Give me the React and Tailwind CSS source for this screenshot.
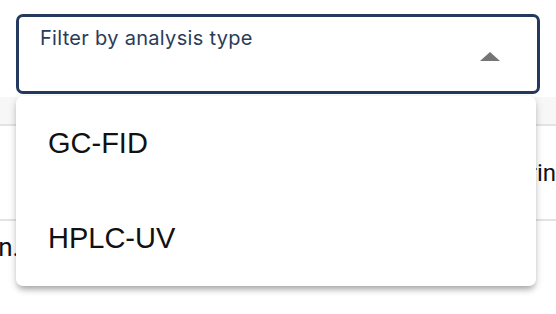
const options = ['GC-FID', 'HPLC-UV'];

export default function App() {
  return (
    <div className="relative h-[314px] w-[556px] overflow-hidden bg-white">
      <div className="px-4 pt-[14px]">
        <div className="flex h-[80px] items-start justify-between rounded-[7px] border-[3px] border-[#233a5e] bg-white pl-[21px] pr-[37px] pt-[8px]">
          <span className="font-['Inter',sans-serif] text-[20px] leading-[26px] tracking-[0.3px] text-[#2b3b57]">
            Filter by analysis type
          </span>
          <span className="mt-[27px] h-0 w-0 border-x-[10px] border-b-[9px] border-x-transparent border-b-[#757575]" />
        </div>
      </div>

      {/* table behind the open menu */}
      <div className="mt-[3px] font-['Roboto',sans-serif] text-[#111]">
        <div className="h-[29px] border-b-2 border-[#e3e3e3] bg-[#f7f7f7]" />
        <div className="flex h-[95px] items-center justify-end border-b-2 border-[#e3e3e3] text-[24px]">
          <span className="whitespace-nowrap">Aspirin</span>
        </div>
        <div className="flex h-[60px] items-center pb-[8px] text-[26px]">
          <span className="-ml-[16px] whitespace-nowrap">an.n</span>
        </div>
      </div>

      <ul className="absolute left-4 right-5 top-[96px] rounded-[7px] bg-white shadow-[0_5px_6px_-2px_rgba(0,0,0,0.3),0_2px_10px_rgba(0,0,0,0.12)]">
        {options.map((o) => (
          <li
            key={o}
            className="flex h-[95px] items-center px-8 font-['Liberation_Sans',sans-serif] text-[29px] text-[#111]"
          >
            {o}
          </li>
        ))}
      </ul>
    </div>
  );
}
